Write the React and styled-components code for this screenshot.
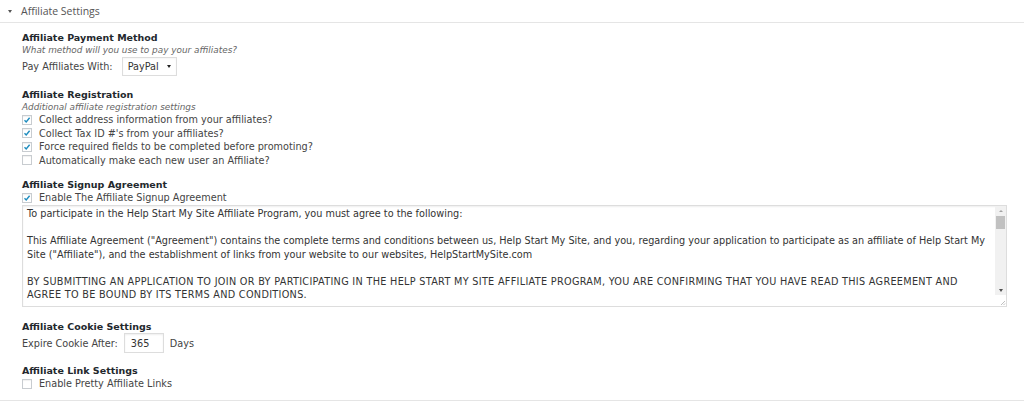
import React from "react";
import styled, { createGlobalStyle } from "styled-components";

const GlobalStyle = createGlobalStyle`
  body {
    margin: 0;
    background: #fff;
    font-family: "DejaVu Sans", Verdana, sans-serif;
    font-size: 9.7px;
    color: #444;
  }
`;

const Panel = styled.div`
  width: 1024px;
  height: 401px;
  overflow: hidden;
  border-bottom: 1px solid #e5e5e5;
  box-sizing: border-box;
`;

const Header = styled.div`
  height: 22px;
  display: flex;
  align-items: center;
  padding-left: 8px;
  border-bottom: 1px solid #e5e5e5;
  font-family: "Open Sans", sans-serif;
  font-size: 10.5px;
  color: #555;
`;

const Caret = styled.span`
  width: 0;
  height: 0;
  border-left: 2.5px solid transparent;
  border-right: 2.5px solid transparent;
  border-top: 3px solid #555;
  margin-right: 9px;
  margin-top: 1px;
`;

const Body = styled.div`
  padding: 9px 17px 0 22px;
  display: flex;
  flex-direction: column;
  gap: 12px;
`;

const Section = styled.section`
  display: flex;
  flex-direction: column;
`;

const Title = styled.h3`
  margin: 0;
  font-size: 9.5px;
  line-height: 12px;
  font-weight: bold;
  color: #23282d;
`;

const Hint = styled.p`
  margin: 0;
  font-size: 8.9px;
  font-style: italic;
  line-height: 12px;
  color: #666;
`;

const Row = styled.div`
  display: flex;
  align-items: center;
  height: ${(p) => p.$h || 13.5}px;
  gap: ${(p) => p.$gap || 6}px;
`;

const Select = styled.div`
  display: flex;
  align-items: center;
  height: 19px;
  box-sizing: border-box;
  padding: 0 5px 0 5px;
  border: 1px solid #ddd;
  box-shadow: inset 0 1px 2px rgba(0, 0, 0, 0.04);
  background: #fff;
  color: #333;
  gap: 8px;

  &::after {
    content: "";
    border-left: 2px solid transparent;
    border-right: 2px solid transparent;
    border-top: 3px solid #222;
  }
`;

const Box = styled.span`
  width: 10px;
  height: 10px;
  box-sizing: border-box;
  border: 1px solid #c8ccd0;
  background: #fff;
  display: inline-flex;
  align-items: center;
  justify-content: center;
  flex-shrink: 0;
  box-shadow: inset 0 1px 1px rgba(0, 0, 0, 0.06);
`;

function Check({ checked, children }) {
  return (
    <Row $gap={7}>
      <Box>
        {checked && (
          <svg width="8" height="8" viewBox="0 0 8 8">
            <path d="M1.5 4.2 L3.2 5.9 L6.6 1.8" fill="none" stroke="#1e8cbe" strokeWidth="1.4" />
          </svg>
        )}
      </Box>
      <span>{children}</span>
    </Row>
  );
}

const AgreementBox = styled.div`
  display: flex;
  height: 102px;
  box-sizing: border-box;
  border: 1px solid #ddd;
  box-shadow: inset 0 1px 2px rgba(0, 0, 0, 0.07);
  margin-top: 0.5px;
  margin-bottom: 2px;
`;

const AgreementText = styled.div`
  flex: 1;
  overflow: hidden;
  padding: 1px 0 0 4px;
  line-height: 13.5px;
  color: #333;
  white-space: pre-wrap;
`;

const Caps = styled.span`
  letter-spacing: 0.3px;
`;

const Scrollbar = styled.div`
  width: 11px;
  display: flex;
  flex-direction: column;
  background-color: #f1f1f1;
  background-image: radial-gradient(#dcdcdc 0.5px, transparent 0.6px);
  background-size: 2px 2px;
`;

const Arrow = styled.div`
  height: 10px;
  display: flex;
  align-items: center;
  justify-content: center;
  background: #f1f1f1;

  &::after {
    content: "";
    border-left: 2px solid transparent;
    border-right: 2px solid transparent;
    ${(p) => (p.$up ? "border-bottom: 2px solid #a3a3a3;" : "border-top: 3px solid #505050;")}
  }
`;

const Thumb = styled.div`
  height: 13px;
  margin: 0 1px;
  background: #c1c1c1;
`;

const Track = styled.div`
  flex: 1;
`;

const Corner = styled.div`
  height: 11px;
  background: #fff;
  display: flex;
  align-items: flex-end;
  justify-content: flex-end;
`;

const Input = styled.div`
  width: 40px;
  height: 20px;
  box-sizing: border-box;
  border: 1px solid #ddd;
  box-shadow: inset 0 1px 2px rgba(0, 0, 0, 0.07);
  padding-left: 6px;
  display: flex;
  align-items: center;
  color: #333;
`;

const intro = `To participate in the Help Start My Site Affiliate Program, you must agree to the following:

This Affiliate Agreement ("Agreement") contains the complete terms and conditions between us, Help Start My Site, and you, regarding your application to participate as an affiliate of Help Start My Site ("Affiliate"), and the establishment of links from your website to our websites, HelpStartMySite.com

`;

const consent = `BY SUBMITTING AN APPLICATION TO JOIN OR BY PARTICIPATING IN THE HELP START MY SITE AFFILIATE PROGRAM, YOU ARE CONFIRMING THAT YOU HAVE READ THIS AGREEMENT AND AGREE TO BE BOUND BY ITS TERMS AND CONDITIONS.`;

export default function App() {
  return (
    <>
      <GlobalStyle />
      <Panel>
        <Header>
          <Caret />
          Affiliate Settings
        </Header>
        <Body>
          <Section>
            <Title>Affiliate Payment Method</Title>
            <Hint>What method will you use to pay your affiliates?</Hint>
            <Row $h={21} $gap={9}>
              <span>Pay Affiliates With:</span>
              <Select>PayPal</Select>
            </Row>
          </Section>

          <Section>
            <Title>Affiliate Registration</Title>
            <Hint>Additional affiliate registration settings</Hint>
            <Check checked>Collect address information from your affiliates?</Check>
            <Check checked>Collect Tax ID #'s from your affiliates?</Check>
            <Check checked>Force required fields to be completed before promoting?</Check>
            <Check>Automatically make each new user an Affiliate?</Check>
          </Section>

          <Section>
            <Title>Affiliate Signup Agreement</Title>
            <Check checked>Enable The Affiliate Signup Agreement</Check>
            <AgreementBox>
              <AgreementText>
                {intro}
                <Caps>{consent}</Caps>
              </AgreementText>
              <Scrollbar>
                <Arrow $up />
                <Thumb />
                <Track />
                <Arrow />
                <Corner>
                  <svg width="7" height="7" viewBox="0 0 7 7">
                    <path d="M6 2 L2 6 M6 4.5 L4.5 6" stroke="#b0b0b0" strokeWidth="0.8" />
                  </svg>
                </Corner>
              </Scrollbar>
            </AgreementBox>
          </Section>

          <Section>
            <Title>Affiliate Cookie Settings</Title>
            <Row $h={20} $gap={6}>
              <span>Expire Cookie After:</span>
              <Input>365</Input>
              <span>Days</span>
            </Row>
          </Section>

          <Section>
            <Title>Affiliate Link Settings</Title>
            <Check>Enable Pretty Affiliate Links</Check>
          </Section>
        </Body>
      </Panel>
    </>
  );
}
